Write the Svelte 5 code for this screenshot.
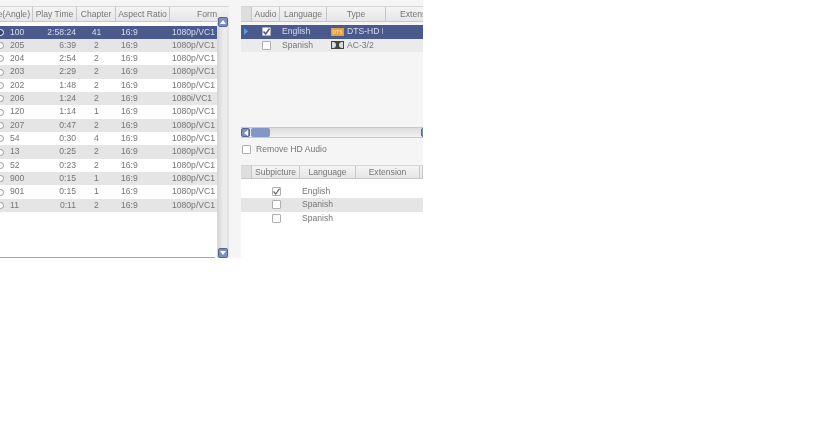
<script>
  const titles = [
    ["100", "2:58:24", "41", "16:9", "1080p/VC1"],
    ["205", "6:39", "2", "16:9", "1080p/VC1"],
    ["204", "2:54", "2", "16:9", "1080p/VC1"],
    ["203", "2:29", "2", "16:9", "1080p/VC1"],
    ["202", "1:48", "2", "16:9", "1080p/VC1"],
    ["206", "1:24", "2", "16:9", "1080i/VC1"],
    ["120", "1:14", "1", "16:9", "1080p/VC1"],
    ["207", "0:47", "2", "16:9", "1080p/VC1"],
    ["54", "0:30", "4", "16:9", "1080p/VC1"],
    ["13", "0:25", "2", "16:9", "1080p/VC1"],
    ["52", "0:23", "2", "16:9", "1080p/VC1"],
    ["900", "0:15", "1", "16:9", "1080p/VC1"],
    ["901", "0:15", "1", "16:9", "1080p/VC1"],
    ["11", "0:11", "2", "16:9", "1080p/VC1"]
  ];
  const subs = [
    { lang: "English", on: true },
    { lang: "Spanish", on: false },
    { lang: "Spanish", on: false }
  ];
</script>

<div class="window">
  <section class="left">
    <div class="list">
      <div class="head titles">
        <span class="h-title">Title(Angle)</span>
        <span>Play Time</span>
        <span>Chapter</span>
        <span>Aspect Ratio</span>
        <span class="h-format">Format</span>
      </div>
      <div class="body">
        <div class="rows">
          {#each titles as t, i}
            <div class="row titles" class:sel={i === 0} class:alt={i % 2 === 1}>
              <span class="c-title"><i class="radio"></i>{t[0]}</span>
              <span class="c-time">{t[1]}</span>
              <span class="c-chap">{t[2]}</span>
              <span class="c-ratio">{t[3]}</span>
              <span class="c-format">{t[4]}</span>
            </div>
          {/each}
        </div>
        <div class="vscroll">
          <b class="btn"><svg width="6" height="4" viewBox="0 0 6 4"><path d="M0 4 3 0l3 4z" fill="#fff"/></svg></b>
          <b class="btn"><svg width="6" height="4" viewBox="0 0 6 4"><path d="M0 0l3 4 3-4z" fill="#fff"/></svg></b>
        </div>
      </div>
    </div>
  </section>

  <section class="right">
    <div class="head audio">
      <span class="blank"></span>
      <span>Audio</span>
      <span>Language</span>
      <span>Type</span>
      <span class="h-ext">Extension</span>
    </div>
    <div class="audio-body">
      <div class="row audio sel">
        <span class="arrow"><svg width="4" height="7" viewBox="0 0 4 7"><path d="M0 0l4 3.5L0 7z" fill="#5a9be8"/></svg></span>
        <span class="center"><i class="check on"><svg width="9" height="9" viewBox="0 0 9 9"><path d="M1.5 4.5 3.7 7 7.5 1.6" fill="none" stroke="#4a5a8c" stroke-width="1.6"/></svg></i></span>
        <span class="c-lang">English</span>
        <span class="c-type"><i class="dts">DTS</i>DTS-HD M</span>
        <span></span>
      </div>
      <div class="row audio alt">
        <span></span>
        <span class="center"><i class="check"></i></span>
        <span class="c-lang">Spanish</span>
        <span class="c-type"><i class="dolby"><u></u><u></u></i>AC-3/2</span>
        <span></span>
      </div>
    </div>
    <div class="hscroll">
      <b class="btn"><svg width="4" height="6" viewBox="0 0 4 6"><path d="M4 0 0 3l4 3z" fill="#fff"/></svg></b>
      <b class="thumb"></b>
      <b class="btn end"></b>
    </div>
    <label class="remove"><i class="check"></i>Remove HD Audio</label>
    <div class="head subs">
      <span class="blank"></span>
      <span>Subpicture</span>
      <span>Language</span>
      <span>Extension</span>
      <span></span>
    </div>
    <div class="subs-body">
      {#each subs as s, i}
        <div class="row subs" class:alt={i === 1}>
          <span></span>
          <span class="center"><i class="check">{#if s.on}<svg width="9" height="9" viewBox="0 0 9 9"><path d="M1.5 4.5 3.7 7 7.5 1.6" fill="none" stroke="#6a6f80" stroke-width="1.3"/></svg>{/if}</i></span>
          <span class="c-sub">{s.lang}</span>
        </div>
      {/each}
    </div>
  </section>
</div>

<style>
  :global(body) {
    background: #fff;
  }
  .window {
    display: flex;
    width: 423px;
    height: 258px;
    background: #f5f5f5;
    font-family: "Liberation Sans", Arial, sans-serif;
    font-size: 8.6px;
    color: #767676;
    filter: blur(0.5px);
    overflow: hidden;
  }
  .left {
    width: 241px;
    flex: none;
    padding-top: 6px;
  }
  .list {
    width: 229px;
    height: 252px;
    display: flex;
    flex-direction: column;
    position: relative;
  }
  .list::after {
    content: "";
    position: absolute;
    left: 0;
    right: 14px;
    bottom: 0;
    height: 1px;
    background: #a4a4a4;
  }
  .head {
    height: 16px;
    flex: none;
    display: grid;
    align-items: center;
    background: linear-gradient(#f4f4f4, #e6e6e6);
    border-top: 1px solid #d6d6d6;
    border-bottom: 1px solid #c8c8c8;
    box-sizing: border-box;
    overflow: hidden;
  }
  .head span {
    height: 100%;
    display: flex;
    align-items: center;
    justify-content: center;
    border-right: 1px solid #c6c6c6;
    white-space: nowrap;
    overflow: hidden;
    box-sizing: border-box;
  }
  .head .blank {
    background: #dedede;
  }
  .titles {
    grid-template-columns: 33px 44px 39px 54px 47px;
  }
  .head .h-title {
    justify-content: flex-end;
    padding-right: 2px;
  }
  .head .h-format {
    justify-content: flex-start;
    padding-left: 27px;
    border-right: 0;
  }
  .body {
    flex: 1;
    display: flex;
    min-height: 0;
  }
  .rows {
    width: 217px;
    padding-top: 3.5px;
    background: #fff;
    box-sizing: border-box;
  }
  .row {
    display: grid;
    align-items: center;
    height: 13.33px;
    line-height: 13.33px;
    white-space: nowrap;
  }
  .alt {
    background: #e5e5e5;
  }
  .sel {
    background: #4a5a8c;
    color: #d8dcea;
  }
  .c-title {
    display: flex;
    align-items: center;
    gap: 4px;
  }
  .radio {
    width: 7px;
    height: 7px;
    margin-left: -3px;
    margin-right: 2px;
    border: 1px solid #999;
    border-radius: 50%;
    background: #fff;
    flex: none;
    box-sizing: border-box;
  }
  .sel .radio {
    border-color: #fff;
    background: #39456e;
  }
  .c-time {
    text-align: right;
    padding-right: 1px;
  }
  .c-chap {
    text-align: center;
  }
  .c-ratio {
    padding-left: 5px;
  }
  .c-format {
    padding-left: 2px;
  }
  .vscroll {
    width: 12px;
    display: flex;
    flex-direction: column;
    justify-content: space-between;
    align-items: center;
    background: linear-gradient(90deg, #d4d4d6, #efeff0 60%, #e2e2e4);
    box-sizing: border-box;
    margin-top: -5px;
  }
  .btn {
    width: 10px;
    height: 10px;
    display: flex;
    align-items: center;
    justify-content: center;
    background: #7c8fc0;
    border: 1px solid #55659a;
    border-radius: 2px;
    box-sizing: border-box;
    flex: none;
  }
  .right {
    flex: 1;
    min-width: 0;
    padding-top: 6px;
    display: flex;
    flex-direction: column;
  }
  .audio {
    grid-template-columns: 11px 28px 47px 56px 40px;
  }
  .head.audio {
    grid-template-columns: 11px 28px 47px 59px 60px;
    width: 182px;
  }
  .head .h-ext {
    justify-content: flex-start;
    padding-left: 14px;
    border-right: 0;
  }
  .audio-body {
    height: 105px;
    flex: none;
    padding-top: 3px;
    box-sizing: border-box;
  }
  .audio-body .row {
    height: 13.5px;
  }
  .audio-body .alt {
    background: #ebebeb;
  }
  .arrow,
  .center {
    display: flex;
    align-items: center;
    justify-content: center;
  }
  .arrow {
    justify-content: flex-start;
    padding-left: 3px;
  }
  .check {
    width: 9px;
    height: 9px;
    display: flex;
    align-items: center;
    justify-content: center;
    background: #fff;
    border: 1px solid #b0b0b0;
    border-radius: 1px;
    box-sizing: border-box;
    flex: none;
  }
  .check svg {
    flex: none;
  }
  .c-lang {
    padding-left: 2px;
  }
  .c-type {
    display: flex;
    align-items: center;
    gap: 3px;
    padding-left: 4px;
    overflow: hidden;
  }
  .dts {
    width: 13px;
    height: 8px;
    flex: none;
    background: #e0a040;
    color: #f7dc9a;
    font-size: 5px;
    font-style: normal;
    font-weight: bold;
    line-height: 8px;
    text-align: center;
  }
  .dolby {
    width: 13px;
    height: 8px;
    flex: none;
    display: flex;
    justify-content: space-between;
    background: #444;
    padding: 1px;
    box-sizing: border-box;
  }
  .dolby u {
    width: 4px;
    background: #ddd;
  }
  .dolby u:first-child {
    border-radius: 0 3px 3px 0;
  }
  .dolby u:last-child {
    border-radius: 3px 0 0 3px;
  }
  .hscroll {
    height: 11px;
    flex: none;
    display: flex;
    align-items: center;
    background: linear-gradient(#dcdcde, #f2f2f3);
    border-top: 1px solid #c8c8c8;
    border-bottom: 1px solid #c8c8c8;
    box-sizing: border-box;
  }
  .hscroll .btn {
    width: 9px;
    height: 9px;
  }
  .hscroll .end {
    margin-left: auto;
    margin-right: -7px;
  }
  .thumb {
    width: 19px;
    height: 9px;
    margin-left: 1px;
    background: #8296c8;
    border-radius: 2px;
  }
  .remove {
    display: flex;
    align-items: center;
    gap: 5px;
    height: 27px;
    padding: 0 0 5px 1px;
    flex: none;
    box-sizing: border-box;
  }
  .head.subs {
    height: 14px;
    grid-template-columns: 11px 48px 56px 64px 3px;
  }
  .subs-body {
    flex: 1;
    padding-top: 6px;
    background: #fff;
  }
  .row.subs {
    grid-template-columns: 11px 48px 1fr;
  }
  .c-sub {
    padding-left: 2px;
  }
</style>
